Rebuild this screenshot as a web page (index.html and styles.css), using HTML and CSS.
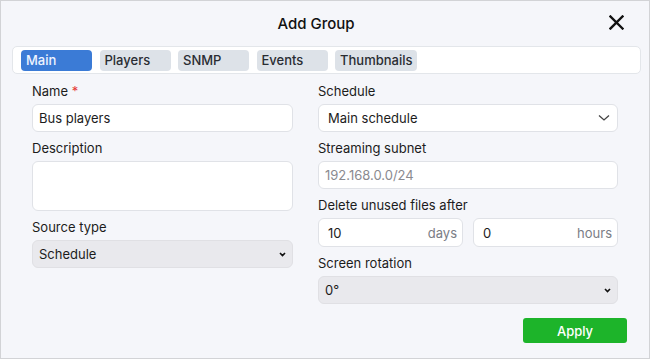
FILE: index.html
```html
<!DOCTYPE html>
<html>
<head>
<meta charset="utf-8">
<link rel="stylesheet" href="styles.css">
</head>
<body>
<div class="dialog">
  <div class="header">
    <div class="title">Add Group</div>
    <button class="close" aria-label="Close">
      <svg width="15" height="15" viewBox="0 0 15 15"><path d="M1.5 1.5L13.5 13.5M13.5 1.5L1.5 13.5" stroke="#111" stroke-width="2.4" stroke-linecap="square" fill="none"/></svg>
    </button>
  </div>
  <div class="tabs">
    <div class="tab active">Main</div>
    <div class="tab">Players</div>
    <div class="tab">SNMP</div>
    <div class="tab">Events</div>
    <div class="tab">Thumbnails</div>
  </div>
  <div class="form">
    <div class="col left">
      <div class="field">
        <label class="label">Name <span class="req">*</span></label>
        <input class="input" type="text" value="Bus players">
      </div>
      <div class="field">
        <label class="label">Description</label>
        <textarea class="input textarea"></textarea>
      </div>
      <div class="field">
        <label class="label">Source type</label>
        <select class="native"><option>Schedule</option></select>
      </div>
    </div>
    <div class="col right">
      <div class="field">
        <label class="label">Schedule</label>
        <div class="custom-select">
          <span>Main schedule</span>
          <svg width="12" height="8" viewBox="0 0 12 8"><path d="M1 1.5L6 6L11 1.5" stroke="#444" stroke-width="1.3" fill="none"/></svg>
        </div>
      </div>
      <div class="field">
        <label class="label">Streaming subnet</label>
        <input class="input" type="text" placeholder="192.168.0.0/24">
      </div>
      <div class="field">
        <label class="label">Delete unused files after</label>
        <div class="pair">
          <div class="suffix-input"><span class="val">10</span><span class="unit">days</span></div>
          <div class="suffix-input"><span class="val">0</span><span class="unit">hours</span></div>
        </div>
      </div>
      <div class="field">
        <label class="label">Screen rotation</label>
        <select class="native"><option>0°</option></select>
      </div>
    </div>
  </div>
  <div class="footer">
    <button class="apply">Apply</button>
  </div>
</div>
</body>
</html>
```
FILE: styles.css
```css
html, body {
  margin: 0;
  padding: 0;
}
body {
  font-family: Inter, "Noto Sans", sans-serif;
  color: #1c1c1c;
}
.dialog {
  width: 650px;
  height: 359px;
  box-sizing: border-box;
  border: 1px solid #d2d3d6;
  background: #f5f6fa;
  display: flex;
  flex-direction: column;
}
.header {
  height: 45px;
  display: flex;
  align-items: center;
  justify-content: center;
  position: relative;
  padding-right: 18px;
}
.title {
  font-size: 15px;
  font-weight: 500;
  color: #111;
  margin-top: -1px;
}
.close {
  position: absolute;
  right: 24px;
  top: 13px;
  width: 17px;
  height: 17px;
  padding: 1px;
  border: none;
  background: transparent;
  display: flex;
}
.tabs {
  margin: 0 8px 0 11px;
  height: 28px;
  box-sizing: border-box;
  background: #fff;
  border: 1px solid #e3e6ea;
  border-radius: 5px;
  display: flex;
  align-items: center;
  gap: 7.5px;
  padding: 0 8px;
}
.tab {
  min-width: 71px;
  height: 21px;
  box-sizing: border-box;
  padding: 0 5px;
  border-radius: 4px;
  background: #dde2e8;
  color: #2a2d33;
  font-size: 13px;
  font-weight: 500;
  line-height: 21px;
}
.tab.active {
  background: #3b7bd6;
  color: #eef4ff;
}
.form {
  display: grid;
  grid-template-columns: 261px 300px;
  column-gap: 25px;
  padding: 9px 0 0 31px;
}
.field {
  display: flex;
  flex-direction: column;
  margin-bottom: 8px;
}
.label {
  font-size: 13px;
  line-height: 17px;
  margin-bottom: 4px;
  color: #1c1c1c;
}
.req {
  color: #e53935;
}
.input {
  height: 28px;
  box-sizing: border-box;
  border: 1px solid #e0e2e7;
  border-radius: 6px;
  background: #fff;
  font-family: inherit;
  font-size: 13px;
  color: #1c1c1c;
  padding: 0 6px;
  outline: none;
}
.input::placeholder {
  color: #8a8a8f;
}
.textarea {
  height: 50px;
  resize: none;
  margin-bottom: 0;
}
.native {
  appearance: none;
  -webkit-appearance: none;
  height: 28px;
  box-sizing: border-box;
  border: 1px solid #e0e0e4;
  border-radius: 6px;
  background-color: #e9e9ed;
  background-image: url("data:image/svg+xml;utf8,<svg xmlns='http://www.w3.org/2000/svg' width='7' height='5' viewBox='0 0 7 5'><path d='M1 1L3.5 3.6L6 1' stroke='%23111' stroke-width='1.6' fill='none'/></svg>");
  background-repeat: no-repeat;
  background-position: right 6px center;
  font-family: inherit;
  font-size: 13px;
  color: #1c1c1c;
  padding: 0 6px;
  outline: none;
}
.custom-select {
  height: 28px;
  box-sizing: border-box;
  border: 1px solid #e0e2e7;
  border-radius: 6px;
  background: #fff;
  font-size: 13px;
  display: flex;
  align-items: center;
  justify-content: space-between;
  padding: 0 7px 0 9px;
}
.pair {
  display: flex;
  gap: 10px;
}
.suffix-input {
  flex: 1;
  height: 29px;
  box-sizing: border-box;
  border: 1px solid #e0e2e7;
  border-radius: 6px;
  background: #fff;
  font-size: 13px;
  display: flex;
  align-items: center;
  justify-content: space-between;
  padding: 0 5px 0 9px;
}
.unit {
  color: #7a7d85;
}
.footer {
  display: flex;
  justify-content: flex-end;
  padding: 6px 22px 0 0;
}
.apply {
  width: 104px;
  height: 25px;
  border: none;
  border-radius: 3px;
  background: #1db42a;
  color: #fff;
  font-family: inherit;
  font-size: 13px;
  font-weight: 500;
}
```
